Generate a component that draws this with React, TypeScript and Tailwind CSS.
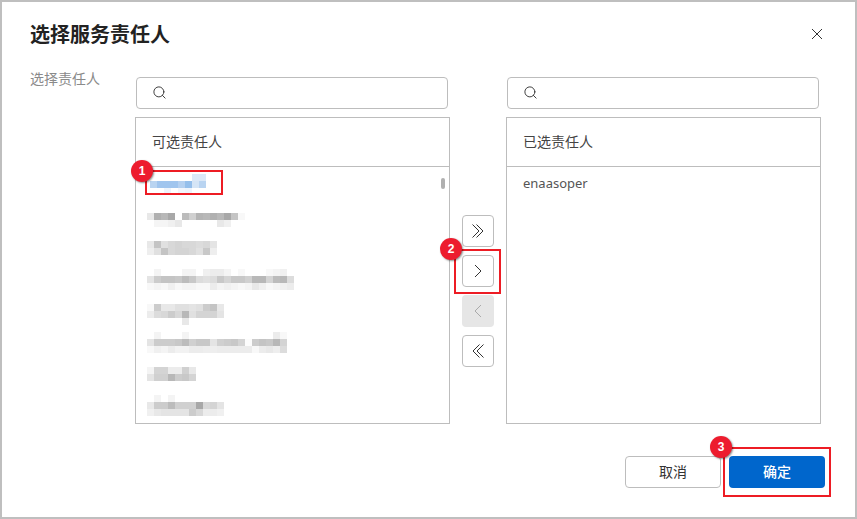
import React from 'react';
import { Search } from 'lucide-react';

type Mosaic = { gap: number; x: number; rows: string[][] };

// blurred names in the left list, each cell is one 7px mosaic block
const names: Mosaic[] = [
  {
    gap: 7,
    x: 3,
    rows: [
      ['fff', 'fff', 'fff', 'fff', 'fff', 'fff', 'dbe8f7', 'dbe8f7'],
      ['b9d4f1', 'a0c5ee', 'a0c5ee', 'a0c5ee', 'b4d0f0', '95bfeb', 'd5e5f6', 'b9d4f1'],
      ['fff', 'fff', 'eef4fc', 'fff', 'f2f6fc', 'eef4fc', 'fff', 'fff'],
    ],
  },
  {
    gap: 18,
    x: 0,
    rows: [
      ['e8e8e8', 'b0b0b0', 'b8b8b8', 'a8a8a8', 'fff', 'bcbcbc', 'd0d0d0', 'b4b4b4', 'b8b8b8', 'b0b0b0', 'b8b8b8', 'a8a8a8', 'c4c4c4', 'f8f8f8'],
      ['fff', 'f5f5f5', 'f5f5f5', 'f0f0f0', 'e8e8e8', 'fff', 'fff', 'fff', 'fff', 'fff', 'e8e8e8', 'f0f0f0', 'fff'],
    ],
  },
  {
    gap: 14,
    x: 0,
    rows: [
      ['e8e8e8', 'c4c4c4', 'e0e0e0', 'd8d8d8', 'd4d4d4', 'd8d8d8', 'd8d8d8', 'dcdcdc', 'd8d8d8', 'e4e4e4'],
      ['eeeeee', 'e0e0e0', 'c4c4c4', 'd8d8d8', 'd4d4d4', 'd4d4d4', 'd8d8d8', 'e0e0e0', 'c8c8c8', 'eeeeee'],
    ],
  },
  {
    gap: 14,
    x: 0,
    rows: [
      ['fff', 'f4f4f4', 'fff', 'fff', 'fff', 'f4f4f4', 'f4f4f4', 'fff', 'f0f0f0', 'ececec', 'ececec', 'f4f4f4', 'fff', 'f8f8f8', 'fff', 'fff', 'fff', 'f8f8f8', 'f4f4f4', 'f0f0f0', 'fff'],
      ['e4e4e4', 'cccccc', 'c4c4c4', 'c4c4c4', 'c8c8c8', 'bcbcbc', 'c8c8c8', 'dcdcdc', 'e0e0e0', 'dcdcdc', 'c8c8c8', 'd4d4d4', 'c8c8c8', 'c8c8c8', 'd0d0d0', 'b8b8b8', 'b8b8b8', 'd4d4d4', 'bcbcbc', 'b8b8b8', 'dcdcdc'],
      ['f8f8f8', 'f4f4f4', 'f8f8f8', 'f0f0f0', 'f8f8f8', 'f4f4f4', 'f4f4f4', 'f8f8f8', 'f8f8f8', 'ececec', 'f4f4f4', 'f0f0f0', 'f4f4f4', 'f8f8f8', 'f4f4f4', 'e8e8e8', 'f0f0f0', 'f8f8f8', 'f4f4f4', 'f0f0f0', 'ececec'],
    ],
  },
  {
    gap: 14,
    x: 0,
    rows: [
      ['f8f8f8', 'cccccc', 'e8e8e8', 'e8e8e8', 'e0e0e0', 'e0e0e0', 'e4e4e4', 'e0e0e0', 'cccccc', 'c4c4c4', 'e8e8e8'],
      ['ececec', 'dcdcdc', 'd8d8d8', 'cccccc', 'd8d8d8', 'b8b8b8', 'e0e0e0', 'd4d4d4', 'd4d4d4', 'd4d4d4', 'e4e4e4'],
      ['fff', 'fff', 'fff', 'fff', 'fff', 'e8e8e8', 'fff'],
    ],
  },
  {
    gap: 7,
    x: 0,
    rows: [
      ['fff', 'f4f4f4', 'fff', 'fff', 'fff', 'f4f4f4', 'fff', 'fff', 'fff', 'fff', 'fff', 'fff', 'fff', 'fff', 'fff', 'fff', 'fff', 'fff', 'ececec', 'f8f8f8'],
      ['e4e4e4', 'cccccc', 'cccccc', 'cccccc', 'c8c8c8', 'bcbcbc', 'd0d0d0', 'c8c8c8', 'c8c8c8', 'e4e4e4', 'd0d0d0', 'cccccc', 'c8c8c8', 'd4d4d4', 'fcfcfc', 'cccccc', 'c4c4c4', 'c8c8c8', 'b8b8b8', 'd4d4d4'],
      ['f8f8f8', 'f0f0f0', 'f4f4f4', 'ececec', 'f2f2f2', 'f2f2f2', 'ececec', 'ececec', 'eeeeee', 'eeeeee', 'ececec', 'ececec', 'ececec', 'ececec', 'ececec', 'f8f8f8', 'ececec', 'e8e8e8', 'eeeeee', 'dcdcdc'],
    ],
  },
  {
    gap: 14,
    x: 0,
    rows: [
      ['f4f4f4', 'd4d4d4', 'd4d4d4', 'ececec', 'ececec', 'd0d0d0', 'e8e8e8'],
      ['e4e4e4', 'd0d0d0', 'd0d0d0', 'b8b8b8', 'cccccc', 'c8c8c8', 'd4d4d4'],
    ],
  },
  {
    gap: 14,
    x: 0,
    rows: [
      ['fff', 'f4f4f4', 'fff', 'f4f4f4', 'fff'],
      ['e8e8e8', 'cccccc', 'cccccc', 'bcbcbc', 'd0d0d0', 'd0d0d0', 'd0d0d0', 'a8a8a8', 'd8d8d8', 'd4d4d4', 'e4e4e4'],
      ['f0f0f0', 'e8e8e8', 'e4e4e4', 'e4e4e4', 'e4e4e4', 'e4e4e4', 'cccccc', 'd8d8d8', 'ececec', 'ececec', 'f0f0f0'],
    ],
  },
];

const BlurredName = ({ name }: { name: Mosaic }) => {
  const cols = Math.max(...name.rows.map((r) => r.length));
  return (
    <svg
      width={cols * 7}
      height={name.rows.length * 7}
      className="block"
      style={{ marginTop: name.gap, marginLeft: name.x }}
    >
      {name.rows.map((row, y) =>
        row.map((c, x) => <rect key={x} x={x * 7} y={y * 7} width="7" height="7" fill={`#${c}`} />)
      )}
    </svg>
  );
};

const Chevrons = ({ d, stroke = '#333' }: { d: string[]; stroke?: string }) => (
  <svg width="16" height="16" viewBox="0 0 16 16" fill="none" stroke={stroke} strokeWidth="1">
    {d.map((p) => (
      <path key={p} d={p} />
    ))}
  </svg>
);

const SearchBox = () => (
  <div className="ml-px flex h-8 w-[312px] items-center rounded border border-[#bdbdbd] bg-white pb-px pl-[15px]">
    <Search className="h-[15px] w-[15px] text-[#333]" strokeWidth={1.5} />
  </div>
);

const MoveButton = ({ d, disabled }: { d: string[]; disabled?: boolean }) => (
  <button
    className={`flex h-8 w-8 items-center justify-center rounded ${
      disabled ? 'bg-[#e6e6e6]' : 'border border-[#bdbdbd] bg-white'
    }`}
  >
    <Chevrons d={d} stroke={disabled ? '#aaa' : '#333'} />
  </button>
);

const Step = ({ n, className }: { n: number; className: string }) => (
  <div
    className={`absolute flex h-[22px] w-[22px] items-center justify-center rounded-full bg-[#ed1c2e] text-[12px] font-bold text-white shadow-[1px_1px_2px_rgba(0,0,0,0.45)] ${className}`}
    style={{ fontFamily: '"Liberation Sans", sans-serif' }}
  >
    {n}
  </div>
);

export default function App() {
  return (
    <div
      className="relative h-[519px] w-[857px] border-2 border-[#bfbfbf] bg-white"
      style={{ fontFamily: '"Noto Sans", "Noto Sans CJK SC", sans-serif' }}
    >
      <div className="flex h-[63px] items-center justify-between pl-[28px] pr-[31px] pt-[1px]">
        <h2 className="pt-[2px] text-[20px] font-bold leading-none text-[#222]">选择服务责任人</h2>
        <svg width="14" height="14" viewBox="0 0 14 14" fill="none" stroke="#333" strokeWidth="1">
          <path d="M2 2l10 10M12 2L2 12" />
        </svg>
      </div>

      <div className="mt-[12px] flex">
        <div className="w-[133px] pl-[28px] text-[14px] leading-[4px]">
          <span className="text-[#8a8a8a]">选择责任人</span>
        </div>

        <div className="w-[315px]">
          <SearchBox />
          <div className="mt-2 h-[307px] w-[315px] overflow-hidden border border-[#bdbdbd]">
            <div className="flex h-[49px] items-center border-b border-[#bdbdbd] pb-px pl-4 text-[14px] text-[#444]">
              可选责任人
            </div>
            <div className="relative pl-[11px]">
              {names.map((name, i) => (
                <BlurredName key={i} name={name} />
              ))}
              <div className="absolute right-[4px] top-[4px] h-[11px] w-[4px] rounded-full bg-[#b0b0b0]" />
            </div>
          </div>
        </div>

        <div className="flex w-[56px] flex-col items-center gap-2 pt-[138px]">
          <MoveButton d={['M2.5 1.5L9 8l-6.5 6.5', 'M6.5 1.5L13 8l-6.5 6.5']} />
          <MoveButton d={['M5 2l6 6-6 6']} />
          <MoveButton disabled d={['M11 2L5 8l6 6']} />
          <MoveButton d={['M9.5 1.5L3 8l6.5 6.5', 'M13.5 1.5L7 8l6.5 6.5']} />
        </div>

        <div className="w-[315px]">
          <SearchBox />
          <div className="mt-2 h-[307px] w-[315px] border border-[#bdbdbd]">
            <div className="flex h-[49px] items-center border-b border-[#bdbdbd] pb-px pl-4 text-[14px] text-[#444]">
              已选责任人
            </div>
            <div className="pl-4 pt-[7px] text-[13px] leading-[18px] text-[#555]">enaasoper</div>
          </div>
        </div>
      </div>

      <div className="mt-8 flex justify-end gap-2 pr-[30px]">
        <button className="h-8 w-[96px] rounded border border-[#bdbdbd] bg-white pb-[2px] text-[14px] text-[#333]">取消</button>
        <button className="h-8 w-[96px] rounded bg-[#0066cc] pb-[2px] text-[14px] font-medium text-white">确定</button>
      </div>

      {/* red tutorial annotations on top of the dialog */}
      <div className="absolute left-[143px] top-[168px] h-[25px] w-[78px] border-2 border-[#ed1c24]" />
      <div className="absolute left-[452px] top-[247px] h-[45px] w-[47px] border-2 border-[#ed1c24]" />
      <div className="absolute left-[721px] top-[445px] h-[50px] w-[108px] border-2 border-[#ed1c24]" />
      <Step n={1} className="left-[129px] top-[158px]" />
      <Step n={2} className="left-[438px] top-[236px]" />
      <Step n={3} className="left-[708px] top-[434px]" />
    </div>
  );
}
